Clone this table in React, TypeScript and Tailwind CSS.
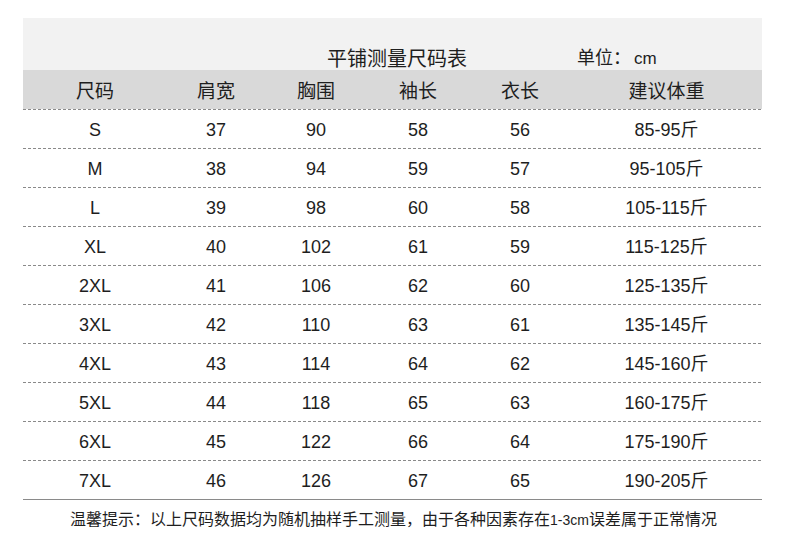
const HEAD = ["尺码", "肩宽", "胸围", "袖长", "衣长", "建议体重"];

const ROWS = [
  ["S", "37", "90", "58", "56", "85-95斤"],
  ["M", "38", "94", "59", "57", "95-105斤"],
  ["L", "39", "98", "60", "58", "105-115斤"],
  ["XL", "40", "102", "61", "59", "115-125斤"],
  ["2XL", "41", "106", "62", "60", "125-135斤"],
  ["3XL", "42", "110", "63", "61", "135-145斤"],
  ["4XL", "43", "114", "64", "62", "145-160斤"],
  ["5XL", "44", "118", "65", "63", "160-175斤"],
  ["6XL", "45", "122", "66", "64", "175-190斤"],
  ["7XL", "46", "126", "67", "65", "190-205斤"],
];

const cols = "grid grid-cols-[144px_98px_102px_102px_102px_191px]";

function Dashed() {
  return (
    <div className="h-px w-full bg-[repeating-linear-gradient(to_right,#8a8a8a_0_3px,transparent_3px_5px)]" />
  );
}

export default function App() {
  return (
    <div
      className="w-[790px] h-[556px] bg-white text-[#1e1e1e] pt-[18px]"
      style={{ fontFamily: '"Liberation Sans", Arial, "Noto Sans CJK SC", sans-serif' }}
    >
      <div className="ml-[23px] w-[739px]">
        {/* title band */}
        <div className="h-[52px] bg-[#f2f2f2] flex items-end pb-[1px]">
          <span className="ml-[304px] text-[20px] leading-[20px]">平铺测量尺码表</span>
          <span className="ml-[110px] text-[18px] leading-[20px]">
            单位：<span className="text-[17px] ml-[3px]">cm</span>
          </span>
        </div>

        {/* header */}
        <div className={`${cols} h-[39px] bg-[#d9d9d9] items-center text-[19px]`}>
          {HEAD.map((h) => (
            <div key={h} className="text-center pt-[5px]">
              {h}
            </div>
          ))}
        </div>
        <Dashed />

        {ROWS.map((r, i) => (
          <div key={r[0]}>
            <div className={`${cols} h-[38px] items-center text-[18px]`}>
              {r.map((c, j) => (
                <div key={j} className="text-center pt-[3px]">
                  {c}
                </div>
              ))}
            </div>
            {i < ROWS.length - 1 ? <Dashed /> : <div className="h-px bg-[#8a8a8a]" />}
          </div>
        ))}

        <p className="mt-[10px] text-[16px] leading-[20px] pl-[47px]">
          温馨提示：以上尺码数据均为随机抽样手工测量，由于各种因素存在
          <span className="text-[14px]">1-3cm</span>误差属于正常情况
        </p>
      </div>
    </div>
  );
}
